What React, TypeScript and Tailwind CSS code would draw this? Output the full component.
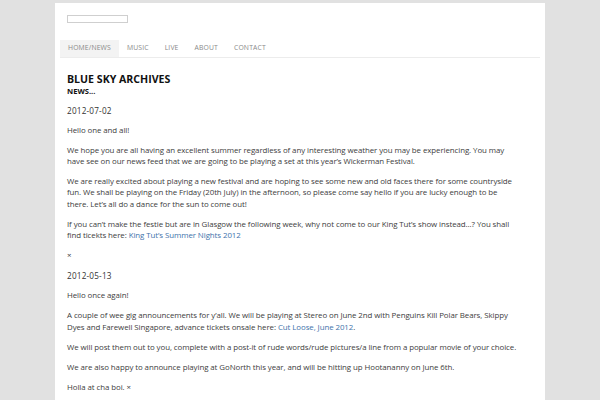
import React from "react";

const font = { fontFamily: '"Open Sans", "DejaVu Sans", sans-serif' };

function P({ children, className = "" }: { children: React.ReactNode; className?: string }) {
  return (
    <p className={"whitespace-nowrap text-[7.9px] leading-[11.4px] mb-[8.6px] text-[#404040] tracking-[-0.08px] " + className}>
      {children}
    </p>
  );
}

function D({ children }: { children: React.ReactNode }) {
  return (
    <p className="whitespace-nowrap text-[8.2px] leading-[11.4px] mb-[8.6px] text-[#333] tracking-[0.2px]">{children}</p>
  );
}

function A({ children }: { children: React.ReactNode }) {
  return <a className="text-[#4273ab]">{children}</a>;
}

export default function App() {
  const nav = ["HOME/NEWS", "MUSIC", "LIVE", "ABOUT", "CONTACT"];
  return (
    <div className="min-h-screen bg-[#e1e1e1] pt-[3px]" style={font}>
      <div className="mx-auto w-[490px] min-h-[397px] bg-white">
        <div className="h-[37px] pt-[12px] pl-[12px]">
          <div className="w-[61px] h-[8px] border border-[#cfcfcf] bg-white" />
        </div>
        <nav className="mx-[5px] flex h-[18px] border-b border-[#ececec]">
          {nav.map((n, i) => (
            <div
              key={n}
              className={
                "flex items-center px-[8px] text-[6.8px] tracking-[0.15px] text-[#8a8a8a] " +
                (i === 0 ? "bg-[#f3f3f3]" : "")
              }
            >
              {n}
            </div>
          ))}
        </nav>
        <div className="px-[12px] pt-[14px]">
          <h1 className="text-[10.6px] font-bold leading-[14px] text-[#111]">BLUE SKY ARCHIVES</h1>
          <h2 className="text-[7.6px] font-bold leading-[11px] text-[#111] mb-[7.5px]">NEWS...</h2>
          <D>2012-07-02</D>
          <P>Hello one and all!</P>
          <P>
            We hope you are all having an excellent summer regardless of any interesting weather you may be experiencing. You may
            <br />
            have see on our news feed that we are going to be playing a set at this year’s Wickerman Festival.
          </P>
          <P>
            We are really excited about playing a new festival and are hoping to see some new and old faces there for some countryside
            <br />
            fun. We shall be playing on the Friday (20th July) in the afternoon, so please come say hello if you are lucky enough to be
            <br />
            there. Let’s all do a dance for the sun to come out!
          </P>
          <P>
            If you can’t make the festie but are in Glasgow the following week, why not come to our King Tut’s show instead...? You shall
            <br />
            find ticekts here: <A>King Tut’s Summer Nights 2012</A>
          </P>
          <P>×</P>
          <D>2012-05-13</D>
          <P>Hello once again!</P>
          <P>
            A couple of wee gig announcements for y’all. We will be playing at Stereo on June 2nd with Penguins Kill Polar Bears, Skippy
            <br />
            Dyes and Farewell Singapore, advance tickets onsale here: <A>Cut Loose, June 2012</A>.
          </P>
          <P>We will post them out to you, complete with a post-it of rude words/rude pictures/a line from a popular movie of your choice.</P>
          <P>We are also happy to announce playing at GoNorth this year, and will be hitting up Hootananny on June 6th.</P>
          <P>Holla at cha boi. ×</P>
        </div>
      </div>
    </div>
  );
}
